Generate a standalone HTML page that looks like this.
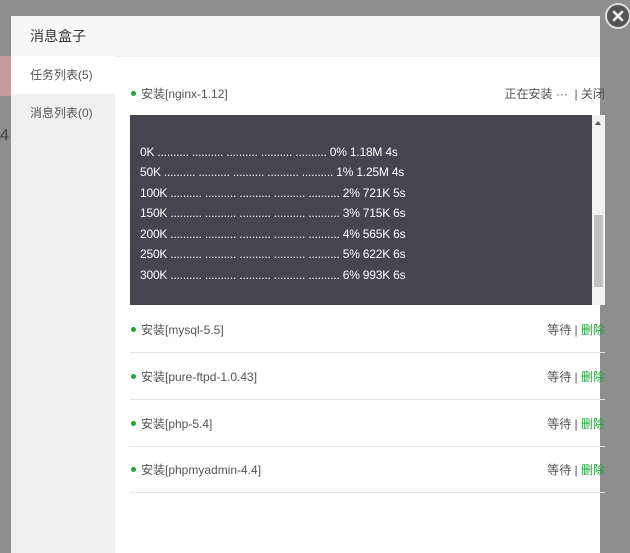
<!DOCTYPE html>
<html><head><meta charset="utf-8"><style>
body{margin:0;width:630px;height:553px;overflow:hidden;background:#8e8e8e;font-family:"Liberation Sans","Noto Sans CJK SC",sans-serif;position:relative}
.bg{position:absolute;left:0;width:11px}
.modal{position:absolute;left:11px;top:16px;width:589px;height:537px;background:#fff}
.hd{position:absolute;left:0;top:0;width:589px;height:40px;background:#f8f8f8;border-bottom:1px solid #eee;font-size:14px;color:#333;line-height:40px;text-indent:19px}
.side{position:absolute;left:0;top:41px;width:104px;height:496px;background:#f0f0f0}
.tab{position:absolute;left:0;width:104px;height:38px;line-height:38px;font-size:12px;color:#555;text-indent:19px}
.close{position:absolute;left:605px;top:3px;width:26px;height:26px;border-radius:50%;background:#555;border:2px solid #ddd;box-sizing:border-box}
.t{position:absolute;font-size:12px;color:#555;white-space:nowrap}
.r{position:absolute;right:25px;font-size:12px;color:#555;white-space:nowrap}
.dot{position:absolute;width:5px;height:5px;border-radius:50%;background:#20a53a}
.term{position:absolute;left:130px;top:115px;width:462px;height:190px;background:#45444f;color:#fff;font-size:12px;letter-spacing:-0.2px}
.term div{position:absolute;left:10px;white-space:nowrap}
.sb{position:absolute;left:592px;top:115px;width:13px;height:190px;background:#f1f1f1}
.line{position:absolute;left:130px;width:475px;height:1px;background:#e6e6e6}
.g{color:#20a53a}
</style></head><body>
<div class="bg" style="top:56px;height:40px;background:#c89a9a"></div>
<div class="bg" style="top:127px;height:30px;color:#444;font-size:16px">4</div>
<div class="modal">
<div class="hd">消息盒子</div>
<div class="side"></div>
<div class="tab" style="top:40px;background:#fff">任务列表(5)</div>
<div class="tab" style="top:78px">消息列表(0)</div>
</div>
<div class="close"><svg width="22" height="22" viewBox="0 0 22 22" style="position:absolute;left:0;top:0"><path d="M7 7L15 15M15 7L7 15" stroke="#fff" stroke-width="2.5" stroke-linecap="round"/></svg></div>
<div class="dot" style="left:131px;top:91px"></div>
<div class="t" style="left:141px;top:85px">安装[nginx-1.12]</div>
<div class="r" style="top:85px">正在安装 ··· &nbsp;| 关闭</div>
<div class="term">
<div style="top:30px">0K .......... .......... .......... .......... .......... 0% 1.18M 4s</div>
<div style="top:50px">50K .......... .......... .......... .......... .......... 1% 1.25M 4s</div>
<div style="top:71px">100K .......... .......... .......... .......... .......... 2% 721K 5s</div>
<div style="top:91px">150K .......... .......... .......... .......... .......... 3% 715K 6s</div>
<div style="top:112px">200K .......... .......... .......... .......... .......... 4% 565K 6s</div>
<div style="top:132px">250K .......... .......... .......... .......... .......... 5% 622K 6s</div>
<div style="top:153px">300K .......... .......... .......... .......... .......... 6% 993K 6s</div>
</div>
<div class="sb"><div style="position:absolute;left:2px;top:100px;width:9px;height:72px;background:#c1c1c1"></div><div style="position:absolute;left:3px;top:6px;border:3.5px solid transparent;border-bottom:4px solid #555;border-top:0"></div></div>
<div class="dot" style="left:131px;top:327px"></div><div class="t" style="left:141px;top:321px">安装[mysql-5.5]</div><div class="r" style="top:321px">等待 | <span class="g">删除</span></div>
<div class="line" style="top:352px"></div>
<div class="dot" style="left:131px;top:374px"></div><div class="t" style="left:141px;top:368px">安装[pure-ftpd-1.0.43]</div><div class="r" style="top:368px">等待 | <span class="g">删除</span></div>
<div class="line" style="top:399px"></div>
<div class="dot" style="left:131px;top:421px"></div><div class="t" style="left:141px;top:415px">安装[php-5.4]</div><div class="r" style="top:415px">等待 | <span class="g">删除</span></div>
<div class="line" style="top:446px"></div>
<div class="dot" style="left:131px;top:467px"></div><div class="t" style="left:141px;top:461px">安装[phpmyadmin-4.4]</div><div class="r" style="top:461px">等待 | <span class="g">删除</span></div>
<div class="line" style="top:492px"></div>
</body></html>
